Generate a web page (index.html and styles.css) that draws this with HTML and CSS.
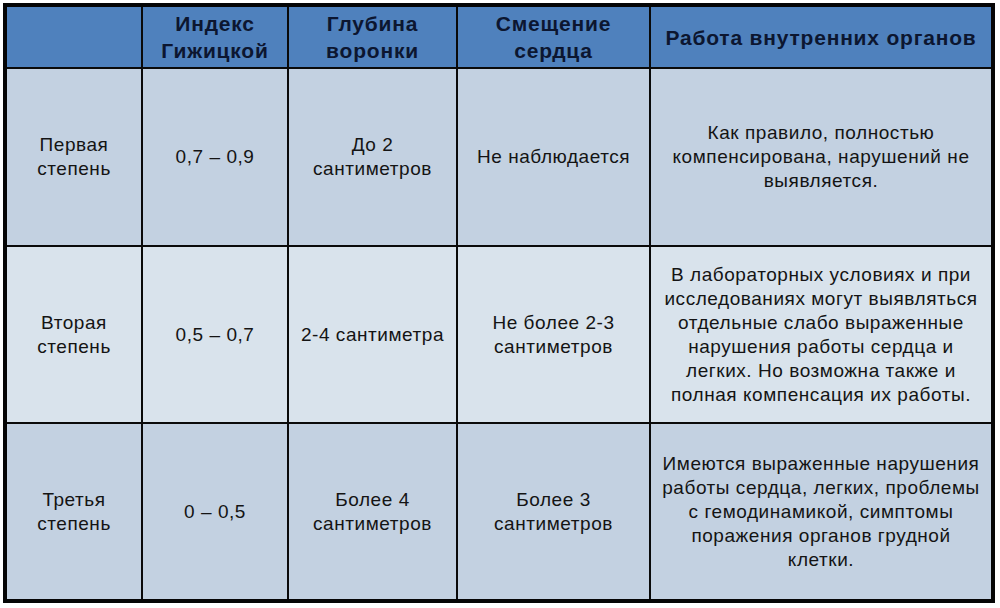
FILE: index.html
```html
<!DOCTYPE html>
<html lang="ru">
<head>
<meta charset="utf-8">
<title>Степени воронкообразной деформации</title>
<link rel="stylesheet" href="styles.css">
</head>
<body>
<table class="grid">
  <colgroup>
    <col class="c1"><col class="c2"><col class="c3"><col class="c4"><col class="c5">
  </colgroup>
  <thead>
    <tr class="head">
      <th></th>
      <th>Индекс<br>Гижицкой</th>
      <th>Глубина<br>воронки</th>
      <th>Смещение<br>сердца</th>
      <th>Работа внутренних органов</th>
    </tr>
  </thead>
  <tbody>
    <tr class="r1">
      <td>Первая<br>степень</td>
      <td>0,7 – 0,9</td>
      <td>До 2<br>сантиметров</td>
      <td>Не наблюдается</td>
      <td>Как правило, полностью<br>компенсирована, нарушений не<br>выявляется.</td>
    </tr>
    <tr class="r2">
      <td>Вторая<br>степень</td>
      <td>0,5 – 0,7</td>
      <td>2-4 сантиметра</td>
      <td>Не более 2-3<br>сантиметров</td>
      <td>В лабораторных условиях и при<br>исследованиях могут выявляться<br>отдельные слабо выраженные<br>нарушения работы сердца и<br>легких. Но возможна также и<br>полная компенсация их работы.</td>
    </tr>
    <tr class="r3">
      <td>Третья<br>степень</td>
      <td>0 – 0,5</td>
      <td>Более 4<br>сантиметров</td>
      <td>Более 3<br>сантиметров</td>
      <td>Имеются выраженные нарушения<br>работы сердца, легких, проблемы<br>с гемодинамикой, симптомы<br>поражения органов грудной<br>клетки.</td>
    </tr>
  </tbody>
</table>
</body>
</html>
```

FILE: styles.css
```css
html, body {
  margin: 0;
  padding: 0;
  background: #ffffff;
}

body {
  padding: 3px 0 0 3px;
  font-family: "Liberation Sans", Arial, sans-serif;
}

.grid {
  width: 992px;
  table-layout: fixed;
  border-collapse: separate;
  border-spacing: 0;
  border: 4px solid #050505;
}

.c1 { width: 136px; }
.c2 { width: 146px; }
.c3 { width: 169px; }
.c4 { width: 193px; }
.c5 { width: 340px; }

.grid th,
.grid td {
  padding: 0;
  text-align: center;
  vertical-align: middle;
  white-space: nowrap;
  border-right: 2px solid #0a0a0a;
  border-bottom: 2px solid #0a0a0a;
}

.grid th:last-child,
.grid td:last-child {
  border-right: 0;
}

.grid tr.r3 td {
  border-bottom: 0;
}

.head th {
  height: 60px;
  background: #4f81bd;
  color: #0c1630;
  font-weight: bold;
  font-size: 21px;
  line-height: 27px;
  letter-spacing: 0.8px;
}

.grid td {
  font-size: 19px;
  line-height: 24px;
  letter-spacing: 0.55px;
  color: #141414;
}

.r1 td { height: 176px; background: #c3d1e1; }
.r2 td { height: 175px; background: #d9e3ec; }
.r3 td { height: 175px; background: #c3d1e1; }
```
